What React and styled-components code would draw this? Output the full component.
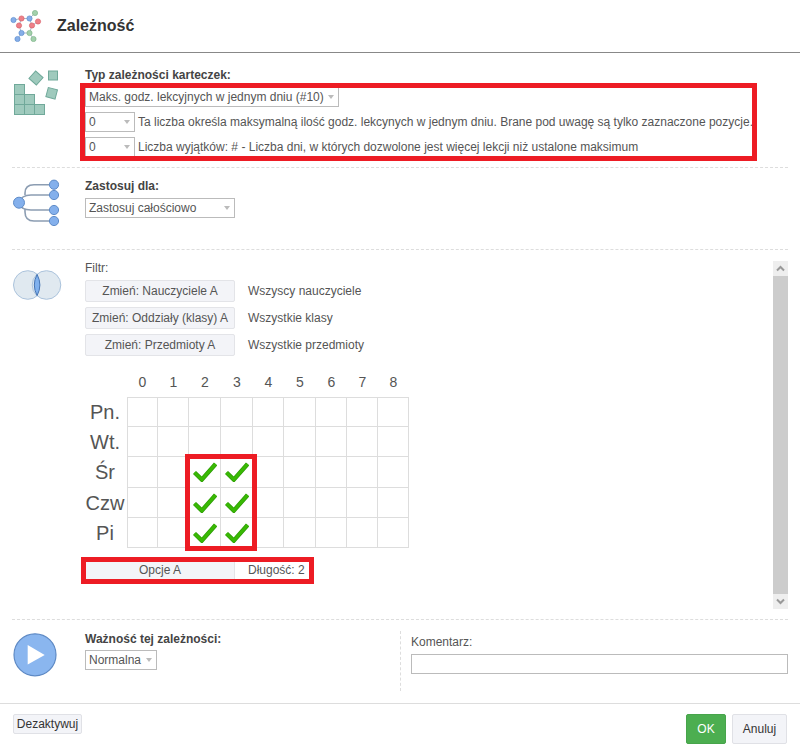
import React from 'react';
import styled, { createGlobalStyle } from 'styled-components';

const GlobalStyle = createGlobalStyle`
    html, body {
        margin: 0;
        padding: 0;
        background: #fff;
    }
    body {
        font-family: "Liberation Sans", Arial, sans-serif;
        font-size: 12px;
        color: #555;
    }
`;

const Page = styled.div`
    width: 800px;
    height: 753px;
    display: flex;
    flex-direction: column;
    overflow: hidden;
`;

const Header = styled.div`
    height: 52px;
    flex: none;
    display: flex;
    align-items: center;
    gap: 15px;
    padding-left: 10px;
    border-bottom: 1px solid #888;
`;

const Title = styled.div`
    font-size: 16px;
    font-weight: bold;
    color: #333;
`;

const Section = styled.div`
    flex: none;
    height: ${props => props.height}px;
    margin: 0 12px;
    display: flex;
    border-bottom: ${props => (props.last ? '0' : '1px dashed #ddd')};
    box-sizing: content-box;
`;

const IconColumn = styled.div`
    width: 73px;
    flex: none;
    padding-top: ${props => props.top}px;
    line-height: 0;
`;

const Content = styled.div`
    flex: 1;
    min-width: 0;
    padding-top: ${props => props.top}px;
`;

const Label = styled.div`
    height: 14px;
    line-height: 14px;
    font-weight: ${props => (props.plain ? 'normal' : 'bold')};
    color: ${props => (props.plain ? '#555' : '#444')};
    margin-bottom: ${props => props.gap}px;
`;

const Annotated = styled.div`
    position: relative;
    width: ${props => props.width || 'auto'};
`;

const RedFrame = styled.div`
    position: absolute;
    left: ${props => props.left}px;
    top: ${props => props.top}px;
    width: ${props => props.width}px;
    height: ${props => props.height}px;
    box-sizing: border-box;
    border: 5px solid #ed1c24;
    pointer-events: none;
`;

const Rows = styled.div`
    display: flex;
    flex-direction: column;
    gap: 5px;
`;

const Row = styled.div`
    display: flex;
    align-items: center;
    gap: 3px;
    white-space: nowrap;
`;

const Combo = styled.div`
    box-sizing: border-box;
    width: ${props => props.width}px;
    height: 20px;
    flex: none;
    display: flex;
    align-items: center;
    justify-content: space-between;
    padding: 0 4px 0 3px;
    border: 1px solid #bbb;
    background: #fff;
    color: #555;
    white-space: nowrap;
    &::after {
        content: '';
        width: 0;
        height: 0;
        border-left: 3.5px solid transparent;
        border-right: 3.5px solid transparent;
        border-top: 4px solid #bbb;
    }
`;

const ScrollArea = styled.div`
    flex: none;
    height: 369px;
    margin: 0 12px;
    display: flex;
    border-bottom: 1px dashed #ddd;
`;

const ScrollBody = styled.div`
    flex: 1;
    display: flex;
    min-width: 0;
`;

const Scrollbar = styled.div`
    width: 15px;
    flex: none;
    margin: 11px 0 10px;
    display: flex;
    flex-direction: column;
`;

const ScrollButton = styled.div`
    height: 15px;
    flex: none;
    background: #eee;
    display: flex;
    align-items: center;
    justify-content: center;
`;

const ScrollThumb = styled.div`
    flex: 1;
    background: #ccc;
`;

const FilterRow = styled.div`
    display: flex;
    align-items: center;
    gap: 13px;
    height: 22px;
`;

const FilterButton = styled.div`
    box-sizing: border-box;
    width: 150px;
    height: 22px;
    flex: none;
    display: flex;
    align-items: center;
    justify-content: center;
    background: #f3f4f8;
    border: 1px solid #e3e4e8;
    border-radius: 2px;
    color: #555;
    white-space: nowrap;
`;

const TimeGrid = styled.div`
    display: grid;
    grid-template-columns: 42px 31px 31px 32px 32px 31px 32px 31px 31px 31px;
    grid-template-rows: 30px 30px 30px 31px 30px 30px;
    width: 324px;
    margin: 11px 0 11px;
`;

const ColumnHead = styled.div`
    display: flex;
    align-items: center;
    justify-content: center;
    font-size: 14px;
    color: #555;
`;

const RowHead = styled.div`
    display: flex;
    align-items: center;
    justify-content: center;
    padding-right: 2px;
    font-size: 20px;
    color: #555;
`;

const Cell = styled.div`
    box-sizing: border-box;
    display: flex;
    align-items: center;
    justify-content: center;
    border-right: 1px solid #ddd;
    border-bottom: 1px solid #ddd;
    border-left: ${props => (props.first ? '1px solid #ddd' : '0')};
    border-top: ${props => (props.top ? '1px solid #ddd' : '0')};
`;

const Corner = styled.div``;

const RightPane = styled.div`
    width: 377px;
    flex: none;
    margin: 11px 0 12px;
    padding: 4px 0 0 10px;
    border-left: 1px dashed #ddd;
`;

const CommentInput = styled.div`
    box-sizing: border-box;
    height: 20px;
    margin-top: 5px;
    border: 1px solid #bbb;
`;

const LeftPane = styled.div`
    width: 315px;
    flex: none;
    padding-top: 12px;
`;

const Footer = styled.div`
    flex: 1;
    display: flex;
    align-items: flex-start;
    justify-content: space-between;
    padding: 10px 13px 0 13px;
    border-top: 1px solid #ddd;
`;

const FooterButtons = styled.div`
    display: flex;
    gap: 6px;
`;

const SmallButton = styled.div`
    box-sizing: border-box;
    height: 20px;
    width: 69px;
    display: flex;
    align-items: center;
    justify-content: center;
    background: #f3f4f8;
    border: 1px solid #e0e1e6;
    border-radius: 2px;
    color: #333;
`;

const BigButton = styled.div`
    box-sizing: border-box;
    height: 30px;
    width: ${props => props.width}px;
    display: flex;
    align-items: center;
    justify-content: center;
    border-radius: 2px;
    background: ${props => (props.primary ? '#4cae50' : '#f3f4f8')};
    border: 1px solid ${props => (props.primary ? '#47a44b' : '#e0e1e6')};
    color: ${props => (props.primary ? '#fff' : '#333')};
`;

const LogoIcon = () => {
    const nodes = [
        [13.5, 20, 'b'], [21.5, 18.5, 'r'], [29.5, 18.5, 'b'], [35, 13, 'g'], [19, 25.5, 'r'], [32, 25.5, 'r'],
        [38, 21.5, 'r'], [21.5, 33, 'b'], [29.5, 33, 'g'], [17.5, 39, 'b'], [33.5, 39, 'g']
    ];
    const fills = { b: ['#86aee8', '#5f8fd0'], r: ['#ee8088', '#d9626b'], g: ['#a3d0ac', '#7fb58b'] };
    return (
        <svg width="32" height="32" viewBox="10 10 32 32">
            <path
                d="M13.5 20L21.5 18.5L29.5 18.5L35 13M21.5 18.5L19 25.5L21.5 33L29.5 33L32 25.5L29.5 18.5M32 25.5L38 21.5M21.5 33L17.5 39M29.5 33L33.5 39"
                fill="none"
                stroke="#a9b8ca"
                strokeWidth="1"
            />
            {nodes.map(([x, y, c]) =>
                <circle key={`${x}-${y}`} cx={x} cy={y} r="2.6" fill={fills[c][0]} stroke={fills[c][1]} strokeWidth="0.7" />
            )}
        </svg>
    );
};

const BlocksIcon = () => {
    const blocks = [[14, 84], [14, 94], [24, 94], [14, 104], [24, 104], [34, 104]];
    return (
        <svg width="50" height="50" viewBox="12 68 50 50">
            <g fill="#9fcabd" stroke="#70a99a" strokeWidth="1">
                {blocks.map(([x, y]) => <rect key={`${x}-${y}`} x={x + 0.5} y={y + 0.5} width="10" height="10" />)}
                <rect x="31" y="73" width="10" height="10" transform="rotate(42 36 78)" />
                <rect x="48.5" y="71" width="9" height="9" />
                <rect x="47" y="88.5" width="9.5" height="9.5" transform="rotate(15 51.5 93)" />
            </g>
        </svg>
    );
};

const TreeIcon = () =>
    <svg width="50" height="50" viewBox="12 179 50 50">
        <g fill="none" stroke="#8c9db2" strokeWidth="1.6">
            <path d="M25 195V193Q25 184.7 34 184.7H54" />
            <path d="M19 203Q21 195 31 195H54" />
            <path d="M19 203Q21 210 31 210H54" />
            <path d="M25 209V212Q25 221 34 221H54" />
        </g>
        <g fill="#84b0ec" stroke="#5f8cc8" strokeWidth="1">
            <circle cx="19" cy="202.7" r="5.5" />
            <circle cx="54" cy="184.7" r="4.6" />
            <circle cx="54" cy="195" r="4.6" />
            <circle cx="54" cy="210" r="4.6" />
            <circle cx="54" cy="221" r="4.6" />
        </g>
    </svg>;

const VennIcon = () =>
    <svg width="50" height="32" viewBox="11 269 50 32">
        <g fill="#e0e9f0" stroke="#abc3dc" strokeWidth="1">
            <circle cx="26.8" cy="285" r="14.3" />
            <circle cx="45.5" cy="285" r="14.3" />
        </g>
        <path d="M36.1 274.4Q30.5 285 36.1 295.6Q41.7 285 36.1 274.4Z" fill="#80b1ee" stroke="#4474b4" strokeWidth="1" />
    </svg>;

const PlayIcon = () =>
    <svg width="46" height="46" viewBox="13 632 46 46">
        <circle cx="36" cy="654.8" r="21" fill="#8ab6ef" stroke="#5d89c4" strokeWidth="1.2" />
        <path d="M28.7 645L45.7 655L28.7 664.5Z" fill="#fff" />
    </svg>;

const CheckIcon = () =>
    <svg width="24" height="20" viewBox="-12 -10 24 20">
        <path d="M-10.5 0.5L-3.2 7.6L10.6 -8" fill="none" stroke="#2c9a06" strokeWidth="4.4" />
        <path d="M-10.5 0.5L-3.2 7.6L10.6 -8" fill="none" stroke="#39b904" strokeWidth="3" />
    </svg>;

const Chevron = ({ up }) =>
    <svg width="9" height="7" viewBox="0 0 9 7">
        <path d={up ? 'M1 5.5L4.5 2L8 5.5' : 'M1 1.5L4.5 5L8 1.5'} fill="none" stroke="#999" strokeWidth="2" />
    </svg>;

const hours = [0, 1, 2, 3, 4, 5, 6, 7, 8];
const days = ['Pn.', 'Wt.', 'Śr', 'Czw', 'Pi'];

const isChecked = (dayIndex, hour) => dayIndex >= 2 && (hour === 2 || hour === 3);

const filters = [
    ['Zmień: Nauczyciele A', 'Wszyscy nauczyciele'],
    ['Zmień: Oddziały (klasy) A', 'Wszystkie klasy'],
    ['Zmień: Przedmioty A', 'Wszystkie przedmioty']
];

export default function App() {
    return (
        <Page>
            <GlobalStyle />
            <Header>
                <LogoIcon />
                <Title>Zależność</Title>
            </Header>

            <Section height={114}>
                <IconColumn top={15}><BlocksIcon /></IconColumn>
                <Content top={15}>
                    <Label gap={5}>Typ zależności karteczek:</Label>
                    <Annotated>
                        <Rows>
                            <Row><Combo width={254}>Maks. godz. lekcyjnych w jednym dniu (#10)</Combo></Row>
                            <Row>
                                <Combo width={50}>0</Combo>
                                Ta liczba określa maksymalną ilość godz. lekcynych w jednym dniu. Brane pod uwagę są tylko zaznaczone pozycje.
                            </Row>
                            <Row>
                                <Combo width={50}>0</Combo>
                                Liczba wyjątków: # - Liczba dni, w których dozwolone jest więcej lekcji niż ustalone maksimum
                            </Row>
                        </Rows>
                        <RedFrame left={-5} top={-4} width={677} height={78} />
                    </Annotated>
                </Content>
            </Section>

            <Section height={81}>
                <IconColumn top={11}><TreeIcon /></IconColumn>
                <Content top={11}>
                    <Label gap={5}>Zastosuj dla:</Label>
                    <Combo width={150}>Zastosuj całościowo</Combo>
                </Content>
            </Section>

            <ScrollArea>
                <ScrollBody>
                    <IconColumn top={19}><VennIcon /></IconColumn>
                    <Content top={11}>
                        <Label plain gap={5}>Filtr:</Label>
                        <Rows>
                            {filters.map(([action, value]) =>
                                <FilterRow key={action}>
                                    <FilterButton>{action}</FilterButton>
                                    {value}
                                </FilterRow>
                            )}
                        </Rows>
                        <Annotated width="324px">
                            <TimeGrid>
                                <Corner />
                                {hours.map(hour => <ColumnHead key={hour}>{hour}</ColumnHead>)}
                                {days.map((day, dayIndex) =>
                                    <React.Fragment key={day}>
                                        <RowHead>{day}</RowHead>
                                        {hours.map(hour =>
                                            <Cell key={hour} first={hour === 0} top={dayIndex === 0}>
                                                {isChecked(dayIndex, hour) && <CheckIcon />}
                                            </Cell>
                                        )}
                                    </React.Fragment>
                                )}
                            </TimeGrid>
                            <RedFrame left={100} top={87} width={72} height={97} />
                        </Annotated>
                        <Annotated>
                            <FilterRow>
                                <FilterButton>Opcje A</FilterButton>
                                Długość: 2
                            </FilterRow>
                            <RedFrame left={-4} top={-2} width={233} height={27} />
                        </Annotated>
                    </Content>
                </ScrollBody>
                <Scrollbar>
                    <ScrollButton><Chevron up /></ScrollButton>
                    <ScrollThumb />
                    <ScrollButton><Chevron /></ScrollButton>
                </Scrollbar>
            </ScrollArea>

            <Section height={83} last>
                <IconColumn top={12}><PlayIcon /></IconColumn>
                <LeftPane>
                    <Label gap={4}>Ważność tej zależności:</Label>
                    <Combo width={72}>Normalna</Combo>
                </LeftPane>
                <RightPane>
                    <Label plain gap={0}>Komentarz:</Label>
                    <CommentInput />
                </RightPane>
            </Section>

            <Footer>
                <SmallButton>Dezaktywuj</SmallButton>
                <FooterButtons>
                    <BigButton primary width={40}>OK</BigButton>
                    <BigButton width={55}>Anuluj</BigButton>
                </FooterButtons>
            </Footer>
        </Page>
    );
}
